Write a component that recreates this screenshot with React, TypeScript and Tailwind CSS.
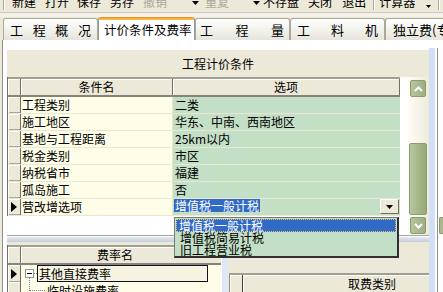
import React from "react";

const FONT = "font-['Noto_Sans_CJK_SC',sans-serif]";

function Tri({ w = 7, h = 4 }: { w?: number; h?: number }) {
  return (
    <svg width={w} height={h} viewBox={`0 0 ${w} ${h}`} className="block flex-none">
      <path d={`M0 0H${w}L${w / 2} ${h}Z`} fill="#000" />
    </svg>
  );
}

function RightTri() {
  return (
    <svg width="6" height="10" viewBox="0 0 6 10" className="block">
      <path d="M0 0L6 5L0 10Z" fill="#000" />
    </svg>
  );
}

function OliveBtn({ up }: { up?: boolean }) {
  return (
    <div className="w-[16px] h-[17px] flex-none rounded-[2px] border border-[#8a9b6c] bg-linear-to-r from-[#b7c59e] to-[#9dae82] flex items-center justify-center">
      <svg width="9" height="6" viewBox="0 0 9 6">
        <path d={up ? "M1 5L4.5 1.5L8 5" : "M1 1L4.5 4.5L8 1"} stroke="#fff" strokeWidth="2" fill="none" />
      </svg>
    </div>
  );
}

const indCls =
  "w-[13px] flex-none bg-[#ece9d8] border-r border-r-[#716f64] shadow-[inset_1px_1px_0_#fff,inset_0_-1px_0_#aca899] flex items-center justify-center";

const rows: [string, string][] = [
  ["工程类别", "二类"],
  ["施工地区", "华东、中南、西南地区"],
  ["基地与工程距离", "25km以内"],
  ["税金类别", "市区"],
  ["纳税省市", "福建"],
  ["孤岛施工", "否"],
];

function Sep() {
  return <div className="w-[2px] h-[16px] flex-none border-l border-[#aca899] border-r border-r-white" />;
}

export default function App() {
  return (
    <div className={`relative w-[443px] h-[292px] overflow-hidden bg-[#ece9d8] flex flex-col text-[12px] leading-[16px] text-black ${FONT}`}>
      {/* toolbar */}
      <div className="h-[12px] flex-none overflow-hidden">
        <div className="-mt-[6px] h-[16px] flex items-center whitespace-nowrap">
          <div className="ml-[3px]"><Sep /></div>
          <span className="ml-[7px]">新建</span>
          <span className="ml-[9px]">打开</span>
          <span className="ml-[8px]">保存</span>
          <span className="ml-[9px]">另存</span>
          <span className="ml-[9px] text-[#aca899]">撤销</span>
          <span className="ml-[25px] mt-[2px]"><Tri /></span>
          <span className="ml-[6px] text-[#aca899]">重复</span>
          <span className="ml-[24px] mt-[2px]"><Tri /></span>
          <span className="ml-[3px]">不存盘</span>
          <span className="ml-[9px]">关闭</span>
          <span className="ml-[10px]">退出</span>
          <div className="ml-[7px]"><Sep /></div>
          <span className="ml-[4px]">计算器</span>
          <span className="ml-[11px] mt-[8px]"><Tri w={5} h={3} /></span>
          <div className="ml-[7px]"><Sep /></div>
        </div>
      </div>
      <div className="h-[5px] flex-none border-t border-[#cbc8b7] bg-[#f3f1e9]" />

      {/* tabs */}
      <div className="h-[23px] flex-none flex items-end pl-[3px] text-[13px] leading-[16px] whitespace-nowrap">
        <div className="w-[95px] h-[22px] flex-none rounded-t-[3px] border border-b-0 border-[#aca899] bg-linear-to-b from-white to-[#e6e5dc] flex items-center justify-between px-[6px] pt-[1px]">
          <span>工</span><span>程</span><span>概</span><span>况</span>
        </div>
        <div className="w-[97px] h-[23px] flex-none rounded-t-[3px] border-x border-[#919b9c] bg-white flex flex-col">
          <div className="h-[3px] flex-none rounded-t-[2px] bg-linear-to-b from-[#e68b2c] to-[#ffc73c]" />
          <div className="flex-1 flex items-center pl-[5px] text-[12.5px]">计价条件及费率</div>
        </div>
        <div className="w-[95px] h-[22px] flex-none rounded-t-[3px] border border-b-0 border-[#aca899] bg-linear-to-b from-white to-[#e6e5dc] flex items-center justify-between pl-[4px] pr-[5px] pt-[1px]">
          <span>工</span><span>程</span><span>量</span>
        </div>
        <div className="w-[95px] h-[22px] flex-none rounded-t-[3px] border border-b-0 border-[#aca899] bg-linear-to-b from-white to-[#e6e5dc] flex items-center justify-between px-[6px] pt-[1px]">
          <span>工</span><span>料</span><span>机</span>
        </div>
        <div className="flex-1 h-[22px] rounded-tl-[3px] border-l border-t border-[#aca899] bg-linear-to-b from-white to-[#e6e5dc] flex items-center pl-[7px] pt-[1px] overflow-hidden">
          独立费(专业
        </div>
      </div>

      {/* content */}
      <div className="flex-1 min-h-0 flex ml-[2px] border-l border-[#8e8e8e] bg-white">
        <div className="w-[4px] flex-none" />
        <div className="w-[422px] flex-none flex flex-col pt-[10px]">
          <div className="h-[27px] flex-none bg-[#ece9d8] flex items-center justify-center">工程计价条件</div>

          <div className="h-[158px] flex-none flex">
            {/* grid */}
            <div className="w-[401px] flex-none bg-white">
              <div className="w-[393px] border-l border-[#716f64] flex flex-col">
                <div className="h-[20px] flex-none flex border-t-2 border-t-[#a19f8f] border-b-2 border-b-[#85837a]">
                  <div className="w-[13px] flex-none bg-[#ece9d8] border-r border-[#716f64] shadow-[inset_1px_1px_0_#fff]" />
                  <div className="w-[152px] flex-none bg-[#ece9d8] border-r border-[#716f64] shadow-[inset_1px_1px_0_#fff] flex items-center justify-center">条件名</div>
                  <div className="w-[227px] flex-none bg-[#ece9d8] border-r border-[#716f64] shadow-[inset_1px_1px_0_#fff] flex items-center justify-center">选项</div>
                </div>
                {rows.map(([n, v]) => (
                  <div key={n} className="h-[17px] flex-none flex border-b border-[#e9e6d2]">
                    <div className={indCls} />
                    <div className="w-[152px] flex-none bg-[#fefde8] border-r border-[#e9e6d2] pl-[1px] flex items-center">{n}</div>
                    <div className="w-[227px] flex-none bg-[#c3dfc5] pl-[2px] flex items-center">{v}</div>
                  </div>
                ))}
                <div className="h-[17px] flex-none flex border-b border-[#e9e6d2]">
                  <div className={indCls}><RightTri /></div>
                  <div className="w-[152px] flex-none bg-[#fefde8] border-r border-[#e9e6d2] pl-[1px] flex items-center">营改增选项</div>
                  <div className="w-[227px] flex-none bg-[#c3dfc5] pl-[1px] flex items-start justify-between">
                    <span className="h-[13px] leading-[13px] bg-[#316ac5] text-white px-[1px]">增值税一般计税</span>
                    <div className="w-[19px] h-[15px] mr-[1px] bg-[#ece9d8] border border-t-white border-l-white border-r-[#716f64] border-b-[#716f64] flex items-center justify-center">
                      <Tri />
                    </div>
                  </div>
                </div>
              </div>
            </div>
            {/* scrollbar */}
            <div className="w-[21px] flex-none bg-linear-to-r from-[#fefcf6] to-[#eeebdc] flex flex-col items-start pl-[2px] pt-[3px]">
              <OliveBtn up />
              <div className="h-[46px] flex-none" />
              <div className="-ml-[1px] w-[18px] h-[72px] flex-none rounded-[2px] border border-[#8b9d6f] bg-linear-to-r from-[#b8c6a2] via-[#a6b78a] to-[#97a97b]" />
              <div className="h-[2px] flex-none" />
              <OliveBtn />
            </div>
          </div>

          <div className="h-[1px] flex-none bg-[#a5a5a5]" />
          <div className="h-[1px] flex-none bg-white" />
          <div className="h-[5px] flex-none bg-linear-to-b from-[#e3e9f1] to-[#c3cedb]" />

          {/* lower */}
          <div className="flex-1 min-h-0 flex bg-[#ece9d8]">
            <div className="w-[214px] flex-none pt-[3px] overflow-hidden">
              <div className="h-full border-l border-[#716f64] flex flex-col">
                <div className="h-[20px] flex-none flex border-t-2 border-t-[#a19f8f] border-b-2 border-b-[#85837a]">
                  <div className="w-[13px] flex-none bg-[#ece9d8] border-r border-[#716f64] shadow-[inset_1px_1px_0_#fff]" />
                  <div className="w-[200px] flex-none bg-[#ece9d8] shadow-[inset_1px_1px_0_#fff] flex items-center pl-[76px]">费率名</div>
                </div>
                <div className="h-[17px] flex-none flex">
                  <div className={indCls}><RightTri /></div>
                  <div className="w-[200px] flex-none bg-[#fefde8] flex items-center">
                    <div className="ml-[4px] w-[9px] h-[9px] flex-none border border-[#919b9c] bg-white flex items-center justify-center">
                      <div className="w-[5px] h-[1px] bg-black" />
                    </div>
                    <div className="w-[3px] flex-none border-t border-dotted border-[#808080]" />
                    <div className="w-[171px] h-[17px] flex-none border border-[#101028] bg-[#f6f4e1] pl-[1px] flex items-center">其他直接费率</div>
                  </div>
                </div>
                <div className="h-[17px] flex-none flex">
                  <div className={indCls} />
                  <div className="w-[200px] flex-none bg-[#fefde8] relative flex items-center pl-[26px]">
                    <div className="absolute left-[8px] -top-[4px] h-[25px] border-l border-dotted border-[#808080]" />
                    <div className="absolute left-[8px] top-[8px] w-[16px] border-t border-dotted border-[#808080]" />
                    临时设施费率
                  </div>
                </div>
              </div>
            </div>
            <div className="w-[7px] flex-none bg-[#dfe8f4] border-l border-white" />
            <div className="flex-1 min-w-0 overflow-hidden pt-[31px] pl-[1px]">
              <div className="h-full border-l border-[#8e8e8e] flex flex-col">
                <div className="h-[20px] flex-none flex border-t-2 border-t-[#a19f8f]">
                  <div className="w-[13px] flex-none bg-[#ece9d8] border-r border-[#403f38] shadow-[inset_1px_1px_0_#fff]" />
                  <div className="w-[258px] flex-none bg-[#ece9d8] shadow-[inset_1px_1px_0_#fff] flex items-center justify-center">取费类别</div>
                </div>
              </div>
            </div>
          </div>
        </div>
        <div className="w-[6px] flex-none pt-[8px]">
          <div className="h-full bg-[#d2e0f5]" />
        </div>
        <div className="w-[8px] flex-none pt-[8px] pl-[2px]">
          <div className="h-full border-l border-[#8e8e8e] pl-[1px] pt-[169px]">
            <div className="w-[6px] h-[17px] rounded-l-[2px] border border-r-0 border-[#8a9b6c] bg-[#a9b98d]" />
          </div>
        </div>
      </div>

      {/* dropdown list */}
      <div className="absolute left-[174px] top-[217px] w-[225px] h-[41px] border border-[#7a7a7a] border-r-2 border-b-2 border-r-[#303030] border-b-[#303030] bg-[#c3dfc5] pt-[1px] text-[12px] leading-[12px]">
        <div className="mx-[1px] h-[13px] bg-[#316ac5] border border-dotted border-[#e8c070] text-white pl-[2px] flex items-center">增值税一般计税</div>
        <div className="h-[12px] pl-[5px] flex items-center">增值税简易计税</div>
        <div className="h-[12px] pl-[5px] flex items-center">旧工程营业税</div>
      </div>
    </div>
  );
}
